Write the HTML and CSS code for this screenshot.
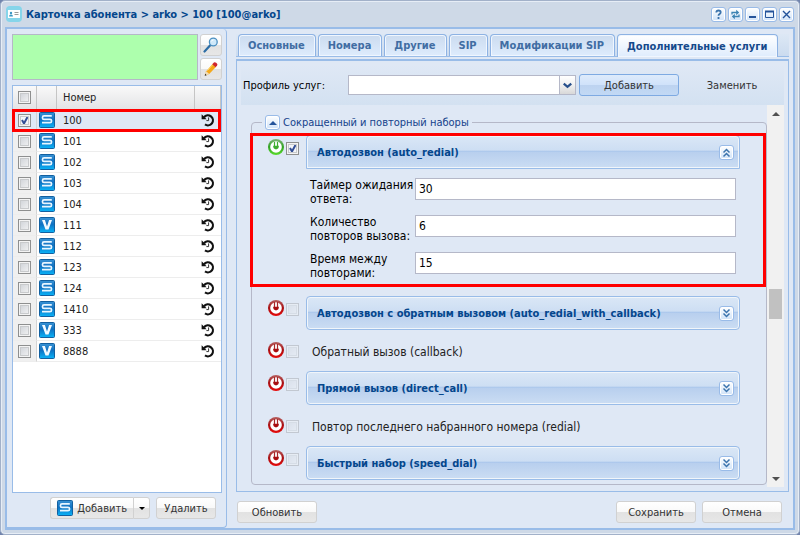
FILE: index.html
```html
<!DOCTYPE html>
<html lang="ru">

<head>
    <meta charset="UTF-8">
    <meta name="viewport" content="width=device-width, initial-scale=1.0">
    <title>Карточка абонента</title>
    <link rel="stylesheet" href="styles.css">
</head>

<body>
    <svg class="sprite" aria-hidden="true">
        <defs>
            <linearGradient id="blue" x1="0" y1="0" x2="0" y2="1">
                <stop offset="0" stop-color="#3a93d4" />
                <stop offset="0.45" stop-color="#0f71c2" />
                <stop offset="1" stop-color="#0ab4f8" />
            </linearGradient>
            <linearGradient id="red" x1="0" y1="0" x2="0" y2="1">
                <stop offset="0" stop-color="#b56060" />
                <stop offset="0.5" stop-color="#a80d10" />
                <stop offset="1" stop-color="#e80a0a" />
            </linearGradient>
            <linearGradient id="green" x1="0" y1="0" x2="0" y2="1">
                <stop offset="0" stop-color="#7fb377" />
                <stop offset="0.5" stop-color="#2fa322" />
                <stop offset="1" stop-color="#5bdc2c" />
            </linearGradient>
        </defs>
        <symbol id="sip" viewBox="0 0 16 16">
            <rect x="0.5" y="0.5" width="15" height="15" rx="1" fill="url(#blue)" stroke="#1260a0" />
            <path d="M12.8 3.9H5q-1.5 0-1.5 1.5v.6q0 1.4 1.5 1.4h6q1.5 0 1.5 1.2v.6q0 1.5-1.5 1.5H3" fill="none" stroke="#e8f6ff" stroke-width="1.7" />
        </symbol>
        <symbol id="virtual" viewBox="0 0 16 16">
            <rect x="0.5" y="0.5" width="15" height="15" rx="1" fill="url(#blue)" stroke="#1260a0" />
            <path d="M3 3h2.9L8 9.6 10.1 3H13L9.5 12.6h-3z" fill="#f2faff" />
        </symbol>
        <symbol id="history" viewBox="0 0 14 14">
            <path d="M3 4.200A5 5 0 1 1 4 11.400" fill="none" stroke="#111" stroke-width="2.200" />
            <path d="M0.600 1.200v5h5z" fill="#111" />
            <path d="M7.600 4.400v3.200H5.400" fill="none" stroke="#333" stroke-width="1" />
        </symbol>
        <symbol id="power-off" viewBox="0 0 16 16">
            <circle cx="8" cy="8" r="8" fill="url(#red)" />
            <circle cx="8" cy="8" r="5.800" fill="#fff" />
            <path d="M5.200 6.800h5.600v1.200q0 1.800-2.800 2.400-2.800-.6-2.800-2.400z" fill="#a80d10" />
            <path d="M6.500 2v5M9.500 2v5" stroke="#a8282a" stroke-width="1.200" />
        </symbol>
        <symbol id="power-on" viewBox="0 0 16 16">
            <circle cx="8" cy="8" r="8" fill="url(#green)" />
            <circle cx="8" cy="8" r="5.800" fill="#fff" />
            <path d="M5.200 6.800h5.600v1.200q0 1.800-2.800 2.400-2.800-.6-2.800-2.400z" fill="#3fae30" />
            <path d="M6.500 3v4M9.500 3v4" stroke="#3fae30" stroke-width="1.200" />
        </symbol>
        <symbol id="chevrons" viewBox="0 0 13 13">
            <path d="M3.500 2.500l3 3 3-3M3.500 6.500l3 3 3-3" fill="none" stroke="#3c74ad" stroke-width="1.500" />
        </symbol>
    </svg>

    <div class="window">
        <header class="titlebar">
            <svg class="card-icon" viewBox="0 0 16 16" aria-hidden="true">
                <rect width="16" height="16" rx="4" fill="#86d5ea" />
                <rect x="2" y="4" width="12" height="8" fill="#fff" />
                <circle cx="5" cy="7" r="1.200" fill="#3c97c4" />
                <path d="M3 10.500q0-2 2-2t2 2z" fill="#3c97c4" />
                <path d="M8.500 6.500h4M8.500 8.500h4" stroke="#9a9a9a" />
            </svg>
            <h1>Карточка абонента &gt; arko &gt; 100 [100@arko]</h1>
            <div class="tools">
                <button class="tool" aria-label="Справка">
                    <svg viewBox="0 0 13 13"><path d="M4.300 4.500q0-2 2.200-2t2.200 1.800q0 1.200-1.200 1.800-1 .5-1 1.600M6.500 9v2" fill="none" stroke="#3c74ad" stroke-width="1.800" /></svg>
                </button>
                <button class="tool" aria-label="Обновить карточку">
                    <svg viewBox="0 0 13 13"><path d="M3 6.500V4.500h5M10 6.500v2H5" fill="none" stroke="#3c84b4" stroke-width="1.300" /><path d="M7.200 1.800v5.400l3-2.700zM5.800 5.800v5.400l-3-2.700z" fill="#3c84b4" /></svg>
                </button>
                <button class="tool" aria-label="Свернуть">
                    <svg viewBox="0 0 13 13"><path d="M3 9h7" stroke="#24539a" stroke-width="2" /></svg>
                </button>
                <button class="tool" aria-label="Развернуть">
                    <svg viewBox="0 0 13 13"><path d="M2.500 3.500h8v6h-8z" fill="none" stroke="#24539a" /><path d="M2 3.500h9" stroke="#24539a" stroke-width="2" /></svg>
                </button>
                <button class="tool" aria-label="Закрыть">
                    <svg viewBox="0 0 13 13"><path d="M3 3l7 7M10 3l-7 7" stroke="#24539a" stroke-width="1.400" /></svg>
                </button>
            </div>
        </header>

        <main class="content">
            <section class="numbers">
                <div class="filter">
                    <textarea class="filter-text" aria-label="Фильтр номеров"></textarea>
                    <div class="filter-buttons">
                        <button class="icon-button" aria-label="Найти">
                            <svg viewBox="0 0 16 16">
                                <path d="M1.500 14.500L7 8.500" stroke="#2d6da5" stroke-width="2.200" stroke-linecap="round" />
                                <circle cx="10.300" cy="5" r="3.900" fill="#cfe9fa" stroke="#4b8fc0" stroke-width="1.300" />
                                <path d="M8.200 4.500q.6-1.600 2.300-1.600" fill="none" stroke="#fff" />
                            </svg>
                        </button>
                        <button class="icon-button" aria-label="Изменить">
                            <svg viewBox="0 0 16 16">
                                <path d="M2 14.500l1.200-4.300 6.600-7.400 3.300 2.900-6.900 7.400z" fill="#f5a91a" />
                                <path d="M4.500 9.500l6-6.700" stroke="#ffd768" />
                                <path d="M9.300 3.300l1.600-1.800q1-.8 2.200.2l.8.700q1 1 .2 2l-1.500 1.800z" fill="#cf2630" />
                                <path d="M2 14.500l1.200-4.300 3 2.800z" fill="#f0dcb8" />
                                <path d="M1.700 14.800l.5-2 1.500 1.400z" fill="#222" />
                            </svg>
                        </button>
                    </div>
                </div>

                <div class="grid">
                    <table>
                        <thead>
                            <tr>
                                <th class="col-check"><input type="checkbox" aria-label="Выбрать все"></th>
                                <th class="col-type"></th>
                                <th class="col-number">Номер</th>
                                <th class="col-history"></th>
                            </tr>
                        </thead>
                        <tbody>
                            <tr class="selected">
                                <td class="col-check"><input type="checkbox" aria-label="100" checked></td>
                                <td class="col-type"><svg><use href="#sip" /></svg></td>
                                <td>100</td>
                                <td class="col-history"><svg><use href="#history" /></svg></td>
                            </tr>
                            <tr>
                                <td class="col-check"><input type="checkbox" aria-label="101"></td>
                                <td class="col-type"><svg><use href="#sip" /></svg></td>
                                <td>101</td>
                                <td class="col-history"><svg><use href="#history" /></svg></td>
                            </tr>
                            <tr>
                                <td class="col-check"><input type="checkbox" aria-label="102"></td>
                                <td class="col-type"><svg><use href="#sip" /></svg></td>
                                <td>102</td>
                                <td class="col-history"><svg><use href="#history" /></svg></td>
                            </tr>
                            <tr>
                                <td class="col-check"><input type="checkbox" aria-label="103"></td>
                                <td class="col-type"><svg><use href="#sip" /></svg></td>
                                <td>103</td>
                                <td class="col-history"><svg><use href="#history" /></svg></td>
                            </tr>
                            <tr>
                                <td class="col-check"><input type="checkbox" aria-label="104"></td>
                                <td class="col-type"><svg><use href="#sip" /></svg></td>
                                <td>104</td>
                                <td class="col-history"><svg><use href="#history" /></svg></td>
                            </tr>
                            <tr>
                                <td class="col-check"><input type="checkbox" aria-label="111"></td>
                                <td class="col-type"><svg><use href="#virtual" /></svg></td>
                                <td>111</td>
                                <td class="col-history"><svg><use href="#history" /></svg></td>
                            </tr>
                            <tr>
                                <td class="col-check"><input type="checkbox" aria-label="112"></td>
                                <td class="col-type"><svg><use href="#sip" /></svg></td>
                                <td>112</td>
                                <td class="col-history"><svg><use href="#history" /></svg></td>
                            </tr>
                            <tr>
                                <td class="col-check"><input type="checkbox" aria-label="123"></td>
                                <td class="col-type"><svg><use href="#sip" /></svg></td>
                                <td>123</td>
                                <td class="col-history"><svg><use href="#history" /></svg></td>
                            </tr>
                            <tr>
                                <td class="col-check"><input type="checkbox" aria-label="124"></td>
                                <td class="col-type"><svg><use href="#sip" /></svg></td>
                                <td>124</td>
                                <td class="col-history"><svg><use href="#history" /></svg></td>
                            </tr>
                            <tr>
                                <td class="col-check"><input type="checkbox" aria-label="1410"></td>
                                <td class="col-type"><svg><use href="#sip" /></svg></td>
                                <td>1410</td>
                                <td class="col-history"><svg><use href="#history" /></svg></td>
                            </tr>
                            <tr>
                                <td class="col-check"><input type="checkbox" aria-label="333"></td>
                                <td class="col-type"><svg><use href="#virtual" /></svg></td>
                                <td>333</td>
                                <td class="col-history"><svg><use href="#history" /></svg></td>
                            </tr>
                            <tr>
                                <td class="col-check"><input type="checkbox" aria-label="8888"></td>
                                <td class="col-type"><svg><use href="#virtual" /></svg></td>
                                <td>8888</td>
                                <td class="col-history"><svg><use href="#history" /></svg></td>
                            </tr>
                        </tbody>
                    </table>
                </div>

                <div class="numbers-buttons">
                    <div class="split">
                        <button class="button split-main"><svg><use href="#sip" /></svg>Добавить</button>
                        <button class="button split-arrow" aria-label="Тип номера"></button>
                    </div>
                    <button class="button">Удалить</button>
                </div>
            </section>

            <section class="card">
                <nav class="tabs">
                    <button class="tab">Основные</button>
                    <button class="tab">Номера</button>
                    <button class="tab">Другие</button>
                    <button class="tab">SIP</button>
                    <button class="tab">Модификации SIP</button>
                    <button class="tab active">Дополнительные услуги</button>
                </nav>

                <div class="panel">
                    <div class="profile">
                        <label for="profile">Профиль услуг:</label>
                        <div class="combo">
                            <select id="profile">
                                <option></option>
                            </select>
                            <svg class="combo-arrow" viewBox="0 0 16 18" aria-hidden="true"><path d="M4 7.500l4 3.500 4-3.500" fill="none" stroke="#28508c" stroke-width="2.400" /></svg>
                        </div>
                        <button class="button primary">Добавить</button>
                        <button class="button plain">Заменить</button>
                    </div>

                    <div class="scroller">
                        <div class="services">
                            <fieldset>
                                <legend>
                                    <button class="tool toggle" aria-label="Свернуть группу"></button>
                                    Сокращенный и повторный наборы
                                </legend>

                                <div class="service marked">
                                    <svg class="power"><use href="#power-on" /></svg>
                                    <input type="checkbox" aria-label="auto_redial" checked>
                                    <div class="service-body">
                                        <div class="service-header open">
                                            <h2>Автодозвон (auto_redial)</h2>
                                            <button class="tool up" aria-label="Свернуть"><svg><use href="#chevrons" /></svg></button>
                                        </div>
                                        <div class="fields">
                                            <label for="timer">Таймер ожидания ответа:</label>
                                            <input type="text" id="timer" value="30">
                                            <label for="repeats">Количество повторов вызова:</label>
                                            <input type="text" id="repeats" value="6">
                                            <label for="interval">Время между повторами:</label>
                                            <input type="text" id="interval" value="15">
                                        </div>
                                    </div>
                                </div>

                                <div class="service">
                                    <svg class="power"><use href="#power-off" /></svg>
                                    <input type="checkbox" aria-label="auto_redial_with_callback" disabled>
                                    <div class="service-body">
                                        <div class="service-header">
                                            <h2>Автодозвон с обратным вызовом (auto_redial_with_callback)</h2>
                                            <button class="tool" aria-label="Развернуть"><svg><use href="#chevrons" /></svg></button>
                                        </div>
                                    </div>
                                </div>

                                <div class="service simple">
                                    <svg class="power"><use href="#power-off" /></svg>
                                    <input type="checkbox" id="callback" disabled>
                                    <label for="callback">Обратный вызов (callback)</label>
                                </div>

                                <div class="service">
                                    <svg class="power"><use href="#power-off" /></svg>
                                    <input type="checkbox" aria-label="direct_call" disabled>
                                    <div class="service-body">
                                        <div class="service-header">
                                            <h2>Прямой вызов (direct_call)</h2>
                                            <button class="tool" aria-label="Развернуть"><svg><use href="#chevrons" /></svg></button>
                                        </div>
                                    </div>
                                </div>

                                <div class="service simple">
                                    <svg class="power"><use href="#power-off" /></svg>
                                    <input type="checkbox" id="redial" disabled>
                                    <label for="redial">Повтор последнего набранного номера (redial)</label>
                                </div>

                                <div class="service">
                                    <svg class="power"><use href="#power-off" /></svg>
                                    <input type="checkbox" aria-label="speed_dial" disabled>
                                    <div class="service-body">
                                        <div class="service-header">
                                            <h2>Быстрый набор (speed_dial)</h2>
                                            <button class="tool" aria-label="Развернуть"><svg><use href="#chevrons" /></svg></button>
                                        </div>
                                    </div>
                                </div>
                            </fieldset>
                        </div>
                        <div class="scrollbar" aria-hidden="true">
                            <div class="arrow-up"></div>
                            <div class="track-before"></div>
                            <div class="thumb"></div>
                            <div class="track-after"></div>
                            <div class="arrow-down"></div>
                        </div>
                    </div>
                </div>

                <footer class="actions">
                    <button class="button wide">Обновить</button>
                    <button class="button wide push">Сохранить</button>
                    <button class="button wide">Отмена</button>
                </footer>
            </section>
        </main>
    </div>
</body>

</html>
```
FILE: styles.css
```css
* {
    box-sizing: border-box;
}

body {
    margin: 0;
    background-color: #7184ad;
    color: #222222;
}

body,
button,
input,
select,
textarea {
    font-family: "DejaVu Sans Condensed", "DejaVu Sans", Tahoma, sans-serif;
    font-stretch: condensed;
    font-size: 11px;
}

h1,
h2 {
    margin: 0;
    font-size: 11px;
    color: #04468c;
}

svg {
    display: block;
}

.sprite {
    position: absolute;
    width: 0;
    height: 0;
}

.window {
    min-height: 100vh;
    display: flex;
    flex-direction: column;
    padding: 0 4px 4px;
    border: 1px solid #a2b1c9;
    border-radius: 5px;
    background-color: #ced9e7;
    box-shadow: inset 0 0 0 1px #e6edf6;
}

/* title bar */
.titlebar {
    height: 26px;
    display: flex;
    align-items: center;
    padding: 0 1px;
}

.card-icon {
    width: 16px;
    height: 16px;
    margin-right: 4px;
}

.tools {
    display: flex;
    gap: 2px;
    margin-left: auto;
}

.tool {
    width: 15px;
    height: 15px;
    padding: 0;
    border: 1px solid #99bbe8;
    border-radius: 3px;
    background: linear-gradient(#ffffff, #cfe2f8);
    box-shadow: inset 0 0 0 1px #ffffff;
}

.tool svg {
    width: 13px;
    height: 13px;
}

.tool.up svg {
    transform: rotate(180deg);
}

.content {
    flex: 1;
    display: flex;
    gap: 6px;
    border: 2px solid #99bce8;
    background-color: #dfe8f5;
}

/* numbers list */
.numbers {
    width: 220px;
    display: flex;
    flex-direction: column;
    padding: 5px 4px 8px 5px;
    border: 1px solid #99bce8;
    border-width: 0 1px 1px 0;
    border-radius: 0 4px 4px 0;
}

.filter {
    display: flex;
    gap: 2px;
}

.filter-text {
    flex: 1;
    min-width: 0;
    border: 1px solid #b5b8c8;
    background-color: #adffad;
    resize: none;
}

.filter-buttons {
    display: grid;
    gap: 2px;
}

.button,
.icon-button {
    height: 22px;
    border: 1px solid #d1d1d1;
    border-radius: 3px;
    background: linear-gradient(#ffffff, #f9f9f9 48%, #e2e2e2 52%, #e7e7e7);
    color: #333333;
}

.icon-button {
    width: 22px;
    padding: 2px;
}

.icon-button svg {
    width: 16px;
    height: 16px;
}

.grid {
    flex: 1;
    margin: 5px 0 4px;
    border: 1px solid #99bce8;
    background-color: #ffffff;
}

table {
    width: 100%;
    table-layout: fixed;
    border-spacing: 0;
}

th {
    height: 24px;
    padding: 0 6px;
    border-right: 1px solid #c5c5c5;
    border-bottom: 1px solid #c5c5c5;
    background: linear-gradient(#f9f9f9, #e3e4e6);
    font-weight: normal;
    text-align: left;
}

td {
    height: 21px;
    padding: 0 6px;
    border-bottom: 1px solid #ededed;
}

.col-check {
    width: 24px;
    padding: 0 5px;
}

td.col-check {
    border-right: 1px solid #d4d4d4;
    background-color: #f0f0f0;
}

.col-type {
    width: 20px;
    padding: 0 2px;
}

.col-number {
    width: auto;
}

.col-type svg,
.split svg,
.power {
    width: 16px;
    height: 16px;
}

.col-history {
    width: 26px;
}

.col-history svg {
    width: 14px;
    height: 14px;
}

.selected {
    position: relative;
}

.selected td {
    background-color: #dfe8f6;
}

/* the frame hangs on a cell, a tr with ::after gets an extra column */
.selected td:last-child::after,
.marked::after {
    content: "";
    position: absolute;
    inset: -1px 0 -1px -1px;
    border: 3px solid #ff0000;
    pointer-events: none;
}

input[type="checkbox"] {
    appearance: none;
    display: block;
    width: 13px;
    height: 13px;
    margin: 0;
    border: 1px solid #8e8f8f;
    background: linear-gradient(135deg, #cbcfd5, #f6f6f6);
    box-shadow: inset 0 0 0 1px #f4f4f4, inset 0 0 0 2px #c8cacc;
}

input[type="checkbox"]:checked {
    background: #f4f6fa url("data:image/svg+xml,%3Csvg xmlns='http://www.w3.org/2000/svg' viewBox='0 0 11 11'%3E%3Cpath d='M3 5l2 3.500L8.500 2' fill='none' stroke='%23334f96' stroke-width='2'/%3E%3C/svg%3E");
}

input[type="checkbox"]:disabled {
    opacity: 0.35;
}

.numbers-buttons {
    display: flex;
    justify-content: flex-end;
    gap: 6px;
    padding-right: 6px;
}

.split {
    display: flex;
}

.split-main {
    display: flex;
    align-items: center;
    gap: 4px;
    padding: 0 6px;
    border-right: 0;
    border-radius: 3px 0 0 3px;
}

.split-arrow {
    width: 17px;
    display: grid;
    place-content: center;
    padding: 0;
    border-radius: 0 3px 3px 0;
}

.split-arrow::before,
.arrow-down::before {
    content: "";
    border: 3px solid transparent;
    border-top-color: #000000;
    border-bottom: 0;
}

.numbers-buttons > .button {
    width: 60px;
    padding: 0;
}

/* subscriber card */
.card {
    flex: 1;
    min-width: 0;
    display: flex;
    flex-direction: column;
    padding: 5px 4px 5px 3px;
}

.tabs {
    display: flex;
    gap: 2px;
    padding-left: 2px;
    border-bottom: 1px solid #99bce8;
    background: linear-gradient(#dde8f5, #cbdbef);
}

.tab {
    height: 22px;
    padding: 0 10px 0 9px;
    border: 1px solid #8db2e3;
    border-bottom: 0;
    border-radius: 4px 4px 0 0;
    background: linear-gradient(#cbdbef, #deecfd);
    box-shadow: inset 0 0 0 1px #f0f6fe;
    color: #416da3;
    font-weight: bold;
    white-space: nowrap;
}

.tab.active {
    height: 23px;
    margin-bottom: -1px;
    background: linear-gradient(#ffffff, #deecfd);
    color: #15498b;
}

.panel {
    flex: 1;
    display: flex;
    flex-direction: column;
    margin-top: 2px;
    padding: 4px;
    border: 1px solid #99bce8;
    border-top-width: 2px;
}

.profile {
    height: 40px;
    display: flex;
    align-items: center;
    gap: 3px;
    padding: 0 2px;
    background: linear-gradient(#dfe8f5, #d3e1f1);
}

.profile label {
    width: 102px;
    color: #000000;
}

.combo {
    flex: 1;
    display: grid;
}

.combo select,
.combo-arrow {
    grid-area: 1 / 1;
}

.combo select {
    height: 20px;
    appearance: none;
    border: 1px solid #b5b8c8;
    border-radius: 0;
    background-color: #ffffff;
}

.combo-arrow {
    width: 17px;
    height: 20px;
    justify-self: end;
    border: 1px solid #b5b8c8;
    background: linear-gradient(#ffffff, #f2f2f2 45%, #d8d8d8);
    pointer-events: none;
}

.profile .button {
    width: 100px;
}

.button.primary {
    border-color: #7eaae2;
    background: linear-gradient(#deebfb, #d0e2fa 48%, #bdd3f0 52%, #c2d9f5);
}

.button.plain {
    border-color: transparent;
    background: none;
}

.scroller {
    flex: 1;
    display: flex;
}

.services {
    flex: 1;
    min-width: 0;
    padding: 10px 0 1px 10px;
}

fieldset {
    margin: 0;
    padding: 5px 26px 4px 16px;
    border: 1px solid #b5b8c8;
    border-radius: 4px;
}

legend {
    display: flex;
    align-items: center;
    gap: 3px;
    height: 15px;
    margin-left: -6px;
    padding: 0 3px;
    color: #15428b;
}

.toggle {
    display: grid;
    place-content: center;
}

.toggle::before,
.arrow-up::before {
    content: "";
    border: 4px solid transparent;
    border-bottom-color: #24539a;
    border-top: 0;
}

.service {
    display: flex;
    align-items: flex-start;
    margin-bottom: 8px;
}

.service:last-child {
    margin-bottom: 0;
}

.power {
    flex: none;
    margin: 4px 2px 0 0;
}

.service > input {
    flex: none;
    margin: 7px 7px 0 0;
}

.service-body {
    flex: 1;
    min-width: 0;
}

.service-header {
    height: 34px;
    display: flex;
    align-items: center;
    justify-content: space-between;
    padding: 0 5px 0 10px;
    border: 1px solid #99bce8;
    border-radius: 4px;
    background: linear-gradient(#dae7f6, #cddef3 45%, #abc7ec 46%, #abc7ec 48%, #b8cfee 50%, #cbddf3);
    box-shadow: inset 0 0 0 1px #f0f5fa;
}

.service-header.open {
    border-radius: 4px 4px 0 0;
}

.fields {
    display: grid;
    grid-template-columns: 105px 1fr;
    row-gap: 15px;
    padding: 9px 4px 14px;
}

.fields label {
    height: 22px;
    line-height: 14px;
    color: #000000;
}

.fields label,
.fields input,
.simple label {
    font-size: 12px;
}

.fields input {
    height: 22px;
    padding: 0 3px;
    border: 1px solid #b5b8c8;
    background-color: #ffffff;
}

.marked {
    position: relative;
}

.marked::after {
    inset: -2px -26px 1px -18px;
}

.simple {
    height: 33px;
    margin-bottom: 0;
}

.simple label {
    padding: 7px 0 0 6px;
    color: #222222;
}

.scrollbar {
    width: 17px;
    display: flex;
    flex-direction: column;
    background-color: #f1f1f1;
}

.arrow-up,
.arrow-down {
    height: 17px;
    display: grid;
    place-content: center;
}

.arrow-up::before {
    border-bottom-color: #505050;
}

.arrow-down::before {
    border-width: 4px 4px 0;
    border-top-color: #505050;
}

.thumb {
    height: 30px;
    margin: 0 2px;
    background-color: #c1c1c1;
}

.track-before {
    flex: 168;
}

.track-after {
    flex: 151;
}

.actions {
    display: flex;
    gap: 6px;
    margin-top: 9px;
    padding: 0 7px 0 1px;
}

.wide {
    width: 80px;
}

.push {
    margin-left: auto;
}
```
